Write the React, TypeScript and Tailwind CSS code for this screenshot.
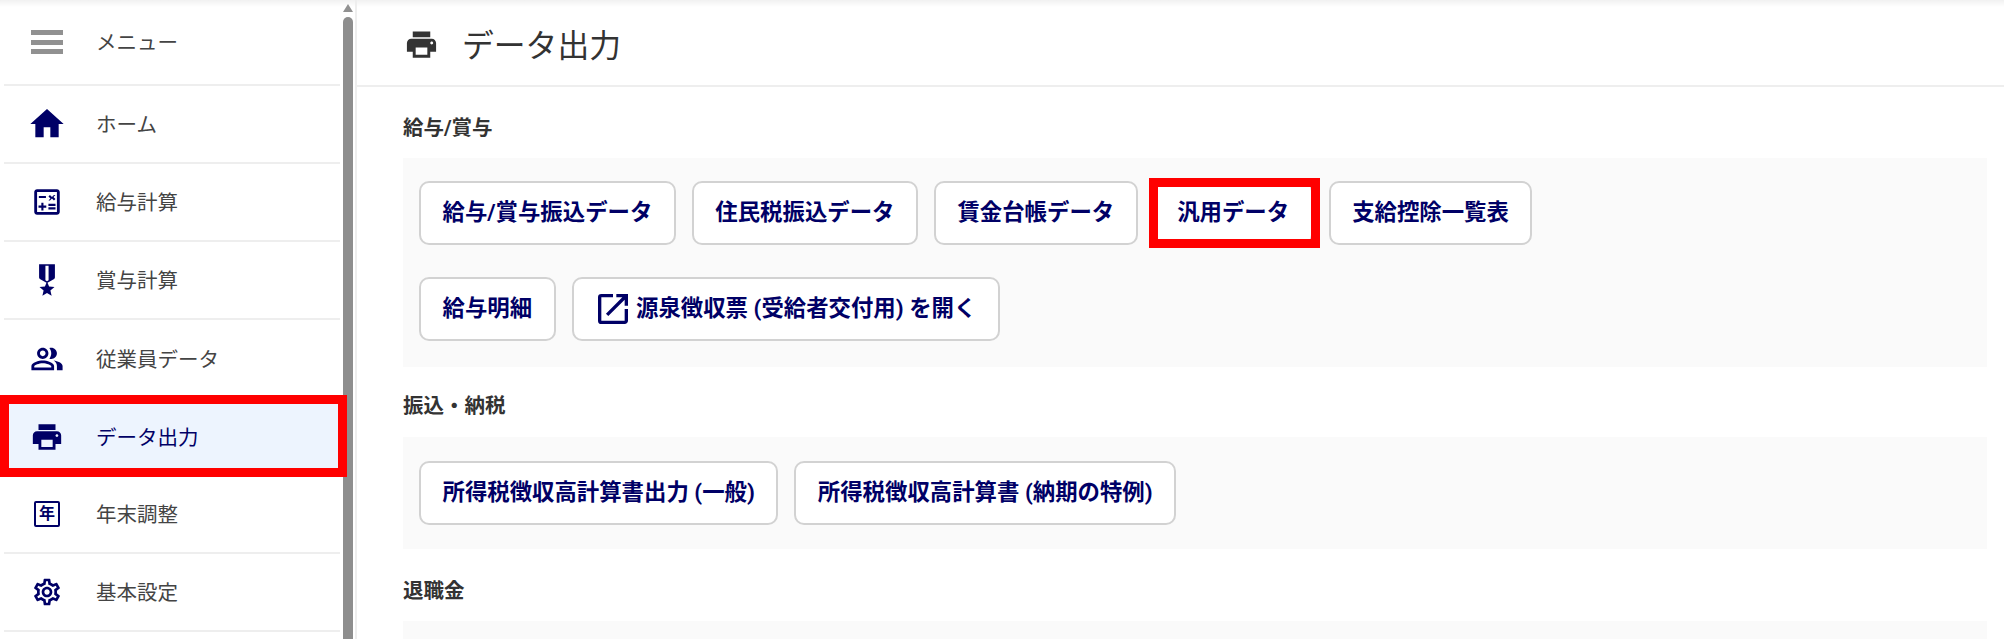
import type { ReactNode } from "react";

const font = "font-['Roboto','Noto_Sans_CJK_JP',sans-serif]";

function HomeIcon() {
  return (
    <svg viewBox="0 0 24 24" className="w-[40px] h-[40px] fill-[#000066]">
      <path d="M10 20v-6h4v6h5v-8h3L12 3 2 12h3v8z" />
    </svg>
  );
}
function CalcIcon() {
  return (
    <svg viewBox="0 0 24 24" className="w-[34px] h-[34px] fill-[#000066]">
      <path d="M19 3H5c-1.100 0-2 .9-2 2v14c0 1.100.9 2 2 2h14c1.100 0 2-.9 2-2V5c0-1.100-.9-2-2-2zm0 16H5V5h14v14z" />
      <path d="M6.250 7.720h5v1.500h-5zM13 15.750h5v1.500h-5zM13 13.250h5v1.500h-5zM8 18h1.500v-2h2v-1.500h-2v-2H8v2H6V16h2zM14.090 10.950l1.410-1.410 1.410 1.410 1.060-1.060-1.410-1.420 1.410-1.410L16.910 7l-1.410 1.410L14.090 7l-1.060 1.060 1.410 1.410-1.410 1.420z" />
    </svg>
  );
}
function MedalIcon() {
  return (
    <svg viewBox="0 0 24 24" className="w-[38px] h-[38px] fill-[#000066]">
      <path d="M17 10.430V2H7v8.430c0 .35.180.680.490.860l4.180 2.510-.990 2.340-3.410.290 2.590 2.240L9.080 22 12 20.240 14.920 22l-.78-3.330 2.590-2.240-3.410-.290-.990-2.340 4.180-2.510c.310-.180.490-.500.490-.860zm-4 1.800-1 .6-1-.6V3h2v9.230z" />
    </svg>
  );
}
function PeopleIcon() {
  return (
    <svg viewBox="0 0 24 24" className="w-[34px] h-[34px] fill-[#000066]">
      <path d="M16.670 13.130C18.040 14.060 19 15.320 19 17v3h4v-3c0-2.180-3.570-3.470-6.330-3.870zM15 12c2.210 0 4-1.790 4-4s-1.790-4-4-4c-.470 0-.910.100-1.330.240C14.500 5.270 15 6.580 15 8s-.500 2.730-1.330 3.760c.420.140.860.240 1.330.240zM9 12c2.210 0 4-1.790 4-4s-1.790-4-4-4-4 1.790-4 4 1.790 4 4 4zm0-6c1.100 0 2 .9 2 2s-.9 2-2 2-2-.9-2-2 .9-2 2-2zM9 13c-2.670 0-8 1.340-8 4v3h16v-3c0-2.660-5.330-4-8-4zm6 5H3v-.990C3.200 16.290 6.300 15 9 15s5.800 1.290 6 2v1z" />
    </svg>
  );
}
function PrintIcon({ className }: { className: string }) {
  return (
    <svg viewBox="0 0 24 24" className={className}>
      <path d="M19 8H5c-1.660 0-3 1.340-3 3v6h4v4h12v-4h4v-6c0-1.660-1.340-3-3-3zm-3 11H8v-5h8v5zm3-7c-.550 0-1-.450-1-1s.450-1 1-1 1 .450 1 1-.450 1-1 1zm-1-9H6v4h12V3z" />
    </svg>
  );
}
function YearIcon() {
  return (
    <div className="w-[26px] h-[26px] border-[2.500px] border-[#000066] rounded-[2px] flex items-center justify-center text-[16px] leading-none font-bold text-[#000066]">
      年
    </div>
  );
}
function GearIcon() {
  return (
    <svg viewBox="0 0 24 24" className="w-[32px] h-[32px] fill-[#000066]">
      <path d="M19.430 12.980c.040-.320.070-.640.070-.980 0-.340-.030-.660-.070-.980l2.110-1.650c.190-.150.240-.420.120-.640l-2-3.460c-.090-.160-.260-.250-.440-.250-.060 0-.120.010-.170.030l-2.490 1c-.520-.400-1.080-.730-1.690-.980l-.380-2.650C14.460 2.180 14.250 2 14 2h-4c-.250 0-.460.180-.490.420l-.380 2.650c-.610.250-1.170.590-1.690.980l-2.490-1c-.060-.020-.120-.030-.180-.030-.170 0-.340.090-.430.250l-2 3.460c-.130.220-.070.490.120.640l2.110 1.650c-.040.320-.070.650-.070.980 0 .330.030.660.070.980l-2.110 1.650c-.190.150-.240.420-.120.640l2 3.460c.090.160.260.250.440.250.060 0 .120-.010.170-.030l2.490-1c.520.400 1.080.730 1.690.980l.380 2.650c.030.240.240.420.490.420h4c.250 0 .460-.180.490-.420l.380-2.650c.610-.250 1.170-.590 1.690-.980l2.490 1c.060.020.120.030.180.030.170 0 .340-.090.430-.250l2-3.460c.120-.220.070-.490-.120-.640l-2.110-1.650zm-1.980-1.710c.040.310.050.520.050.730 0 .210-.020.430-.050.730l-.140 1.130.890.700 1.080.840-.700 1.210-1.270-.510-1.040-.420-.900.680c-.430.320-.840.560-1.250.730l-1.060.430-.160 1.130-.200 1.350h-1.400l-.190-1.350-.160-1.130-1.060-.430c-.430-.180-.830-.410-1.230-.710l-.910-.700-1.060.430-1.270.510-.700-1.210 1.080-.840.890-.700-.140-1.130c-.030-.310-.050-.540-.050-.740s.020-.430.050-.730l.140-1.130-.890-.700-1.080-.840.700-1.210 1.270.510 1.040.420.900-.680c.430-.320.840-.560 1.250-.730l1.060-.430.160-1.130.200-1.350h1.390l.190 1.350.160 1.130 1.060.430c.430.180.830.410 1.230.710l.910.700 1.060-.430 1.270-.510.700 1.210-1.070.850-.890.700.140 1.130zM12 8c-2.210 0-4 1.790-4 4s1.790 4 4 4 4-1.790 4-4-1.790-4-4-4zm0 6c-1.100 0-2-.9-2-2s.9-2 2-2 2 .9 2 2-.9 2-2 2z" />
    </svg>
  );
}
function OpenIcon() {
  return (
    <svg viewBox="0 0 24 24" className="w-[40px] h-[40px] fill-[#000066] -ml-[2px] mr-[3px]">
      <path d="M19 19H5V5h7V3H5a2 2 0 0 0-2 2v14a2 2 0 0 0 2 2h14c1.100 0 2-.9 2-2v-7h-2v7zM14 3v2h3.590l-9.830 9.830 1.410 1.410L19 6.410V10h2V3h-7z" />
    </svg>
  );
}

function NavItem({ icon, label, active, divider = true, first }: { icon: ReactNode; label: string; active?: boolean; divider?: boolean; first?: boolean }) {
  return (
    <div className={`relative ${first ? "h-[86px]" : "h-[78px]"} ml-[4px] flex items-center ${divider ? "border-b-2 border-[#eeeeee]" : ""} ${active ? "bg-[#edf4fe]" : ""}`}>
      <div className="w-[64px] ml-[11px] flex items-center justify-center shrink-0">{icon}</div>
      <span className={`ml-[17px] pt-[2px] text-[20.500px] ${active ? "text-[#000066]" : "text-[#444444]"}`}>{label}</span>
      {active && <div className="absolute left-[-4px] right-[-7px] top-[-3px] bottom-[-1px] border-[9px] border-[#ff0000] pointer-events-none" />}
    </div>
  );
}

function Btn({ children, marked }: { children: ReactNode; marked?: boolean }) {
  return (
    <div className="relative h-[64px] px-[21.500px] flex items-center bg-white border-2 border-[#d2d2d2] rounded-[10px] text-[22.400px] font-bold text-[#000066] whitespace-nowrap">
      {children}
      {marked && <div className="absolute left-[-7px] right-[-9px] top-[-5px] bottom-[-5px] border-[9px] border-[#ff0000] pointer-events-none" />}
    </div>
  );
}

function Section({ title, children, spaced }: { title: string; children: ReactNode; spaced?: boolean }) {
  return (
    <section className={spaced ? "pt-[3px]" : ""}>
      <h2 className="h-[30px] flex items-center text-[20.500px] font-bold text-[#333333]">{title}</h2>
      {children}
    </section>
  );
}

export default function App() {
  return (
    <div className={`${font} w-[2004px] h-[639px] overflow-hidden flex bg-white relative`}>
      <div className="absolute inset-x-0 top-0 h-[7px] bg-gradient-to-b from-[#f1f1f1] to-white" />
      <aside className="relative w-[357px] shrink-0 h-full border-r-2 border-[#eeeeee] flex">
        <nav className="w-[340px] shrink-0">
          <NavItem first icon={<div className="w-[32px] h-[24px] flex flex-col justify-between"><i className="block h-[5px] bg-[#919191]" /><i className="block h-[5px] bg-[#919191]" /><i className="block h-[5px] bg-[#919191]" /></div>} label="メニュー" />
          <NavItem icon={<HomeIcon />} label="ホーム" />
          <NavItem icon={<CalcIcon />} label="給与計算" />
          <NavItem icon={<MedalIcon />} label="賞与計算" />
          <NavItem icon={<PeopleIcon />} label="従業員データ" divider={false} />
          <NavItem icon={<PrintIcon className="w-[34px] h-[34px] fill-[#000066]" />} label="データ出力" active divider={false} />
          <NavItem icon={<YearIcon />} label="年末調整" />
          <NavItem icon={<GearIcon />} label="基本設定" />
        </nav>
        <div className="ml-[3px] w-[10px] flex flex-col items-center pt-[4px]">
          <div className="w-0 h-0 border-x-[5px] border-x-transparent border-b-[8px] border-b-[#919191]" />
          <div className="mt-[5px] w-[10px] flex-1 rounded-t-[5px] bg-[#8e8e8e]" />
        </div>
      </aside>
      <main className="flex-1 min-w-0">
        <header className="h-[87px] border-b-2 border-[#eeeeee] flex items-center pl-[48px] pt-[6px]">
          <PrintIcon className="w-[35px] h-[35px] fill-[#333333] -ml-[1px] -mt-[2px]" />
          <h1 className="ml-[23px] pt-[2px] text-[31.800px] font-normal text-[#333333]">データ出力</h1>
        </header>
        <div className="pl-[46px] pr-[17px] pt-[26px] flex flex-col gap-[24px]">
          <Section title="給与/賞与">
            <div className="mt-[15px] h-[209px] bg-[#fafafa] pl-[16px] pt-[23px] flex flex-col gap-[32px]">
              <div className="flex gap-x-[16px]">
                <Btn>給与/賞与振込データ</Btn>
                <Btn>住民税振込データ</Btn>
                <Btn>賃金台帳データ</Btn>
                <Btn marked>汎用データ</Btn>
                <Btn>支給控除一覧表</Btn>
              </div>
              <div className="flex gap-x-[16px]">
                <Btn>給与明細</Btn>
                <Btn><OpenIcon />源泉徴収票 (受給者交付用) を開く</Btn>
              </div>
            </div>
          </Section>
          <Section title="振込・納税">
            <div className="mt-[16px] h-[112px] bg-[#fafafa] pl-[16px] pt-[24px] flex gap-x-[16px]">
              <Btn>所得税徴収高計算書出力 (一般)</Btn>
              <Btn>所得税徴収高計算書 (納期の特例)</Btn>
            </div>
          </Section>
          <Section title="退職金" spaced>
            <div className="mt-[15px] h-[60px] bg-[#fafafa]" />
          </Section>
        </div>
      </main>
    </div>
  );
}
